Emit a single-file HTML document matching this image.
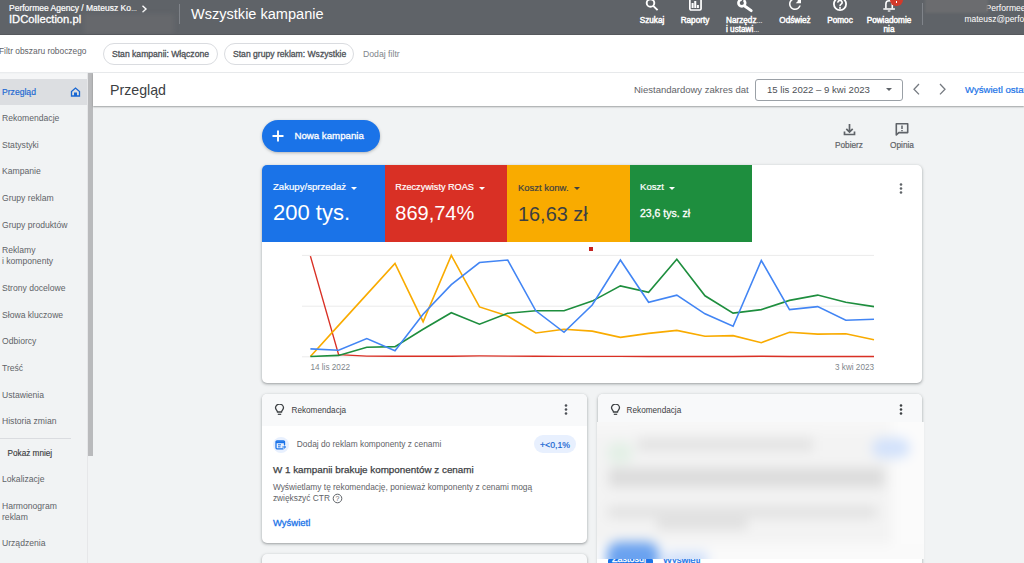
<!DOCTYPE html>
<html><head><meta charset="utf-8">
<style>
*{margin:0;padding:0;box-sizing:border-box}
html,body{width:1024px;height:563px;overflow:hidden;background:#f1f3f4;font-family:"Liberation Sans",sans-serif;color:#3c4043;position:relative}
.t{position:absolute;white-space:nowrap;line-height:1}
.med{-webkit-text-stroke:0.3px currentColor}
#hdr{position:absolute;left:0;top:0;width:1024px;height:35px;background:#5f6368;color:#fff;overflow:hidden;border-bottom:1px solid #56595d}
#fbar{position:absolute;left:0;top:35px;width:1024px;height:37px;background:#fff}
.chip{position:absolute;top:43px;height:22px;border:1px solid #dadce0;border-radius:11px}
.si{position:absolute;left:2px;font-size:8.6px;line-height:1;color:#5f6368;white-space:nowrap}
#sbar{position:absolute;left:88px;top:72px;width:5px;height:384.3px;background:#b9babc}
#tbar{position:absolute;left:93px;top:73px;width:931px;height:33px;background:#fff;box-shadow:0 1px 1.5px rgba(60,64,67,.45)}
.card{position:absolute;background:#fff;border-radius:5px;box-shadow:0 1px 2px rgba(60,64,67,.3),0 1px 3px 1px rgba(60,64,67,.15);overflow:hidden}
.hl{position:absolute;font-size:8.2px;color:#fff;line-height:9px;margin-top:-0.4px;white-space:nowrap;text-align:center;-webkit-text-stroke:0.45px #fff}
.tile{position:absolute;top:165px;height:77px}
.tri{position:absolute;width:0;height:0;border-left:3.5px solid transparent;border-right:3.5px solid transparent;border-top:3.5px solid #fff}
</style></head><body>

<div id="hdr">
  <div class="t" style="left:9px;top:4.2px;font-size:8.5px;color:#fff;-webkit-text-stroke:0.2px #fff">Performee Agency / Mateusz Ko<span style="font-size:6px">…</span></div>
  <svg style="position:absolute;left:141px;top:5px" width="7" height="8" viewBox="0 0 7 8"><path d="M1.5 0.8 L5 4 L1.5 7.2" fill="none" stroke="#fff" stroke-width="1.4"/></svg>
  <div class="t med" style="left:9px;top:13.8px;font-size:11.2px;color:#fff">IDCollection.pl</div>
  <div style="position:absolute;left:84px;top:14px;width:90px;height:20px;background:#66686c;filter:blur(2px)"></div>
  <div style="position:absolute;left:179px;top:4px;width:1px;height:20px;background:#80848a"></div>
  <div class="t" style="left:191px;top:6.7px;font-size:14.55px;color:#fff">Wszystkie kampanie</div>

  <!-- icons -->
  <svg style="position:absolute;left:644px;top:-3px" width="16" height="15" viewBox="0 0 16 15"><circle cx="6.5" cy="6" r="3.8" fill="none" stroke="#fff" stroke-width="1.9"/><path d="M9.2 8.8 L13.6 13.2" stroke="#fff" stroke-width="1.9"/></svg>
  <div class="hl" style="left:638px;top:16px;width:28px">Szukaj</div>

  <svg style="position:absolute;left:688px;top:-3px" width="15" height="15" viewBox="0 0 15 15"><rect x="1.85" y="-1" width="11.2" height="14" fill="none" stroke="#fff" stroke-width="1.7" rx="1.2"/><path d="M4.6 11 V5.9 M7.25 11 V4 M9.9 11 V7.9" stroke="#fff" stroke-width="2"/></svg>
  <div class="hl" style="left:680px;top:16px;width:30px">Raporty</div>

  <svg style="position:absolute;left:736px;top:-4px" width="18" height="18" viewBox="0 0 18 18"><circle cx="5.8" cy="7" r="3.4" fill="none" stroke="#fff" stroke-width="2.6"/><path d="M9 10.2 L15.2 14.6" stroke="#fff" stroke-width="2.9" stroke-linecap="round"/><path d="M5.9 6.8 L7 3" stroke="#5f6368" stroke-width="1.5"/></svg>
  <div class="hl" style="left:726px;top:16px;width:40px;text-align:left">Narzędz<span style="font-size:6px;line-height:0;-webkit-text-stroke:0.2px #fff">…</span><br>i ustawi<span style="font-size:6px;line-height:0;-webkit-text-stroke:0.2px #fff">…</span></div>

  <svg style="position:absolute;left:786px;top:-4.7px" width="18" height="18" viewBox="0 0 24 24"><path fill="#fff" d="M17.65 6.35A7.95 7.95 0 0 0 12 4c-4.42 0-7.99 3.58-7.99 8s3.57 8 7.99 8c3.73 0 6.84-2.55 7.73-6h-2.08A5.99 5.99 0 0 1 12 18c-3.31 0-6-2.690-6-6s2.69-6 6-6c1.66 0 3.140.69 4.22 1.78L13 11h7V4l-2.35 2.35z"/></svg>
  <div class="hl" style="left:778px;top:16px;width:34px">Odśwież</div>

  <svg style="position:absolute;left:832px;top:-2px" width="16" height="15" viewBox="0 0 16 15"><circle cx="8" cy="6" r="6.1" fill="none" stroke="#fff" stroke-width="1.8"/><path d="M5.9 4.6 A2.1 2.1 0 1 1 8.9 6.4 C8.2 6.9 8 7.2 8 8.2" fill="none" stroke="#fff" stroke-width="1.6"/><rect x="7.1" y="9.1" width="1.8" height="1.7" fill="#fff"/></svg>
  <div class="hl" style="left:826px;top:16px;width:28px">Pomoc</div>

  <svg style="position:absolute;left:882px;top:-1.4px" width="14" height="14" viewBox="0 0 14 14"><path d="M3.9 9.6 V5 A3.1 3.1 0 0 1 10.3 5 V9.6" fill="none" stroke="#fff" stroke-width="1.6"/><path d="M1.3 10 H12.9" stroke="#fff" stroke-width="1.5"/><path d="M5.8 12 H8.4" stroke="#fff" stroke-width="1.2"/></svg>
  <div style="position:absolute;left:890px;top:-6.4px;width:12.6px;height:12.6px;border-radius:50%;background:#d23a2b"></div>
  <div style="position:absolute;left:895.6px;top:0.6px;width:1.6px;height:2px;background:#fff"></div>
  <div class="hl" style="left:864px;top:16px;width:50px">Powiadomie<br>nia</div>

  <div style="position:absolute;left:922px;top:3px;width:1px;height:22px;background:#80848a"></div>
  <div class="t" style="left:985.5px;top:4.2px;font-size:8.6px;color:#fff">Performee</div>
  <div class="t" style="left:964.5px;top:15px;font-size:8.45px;color:#fff">mateusz@performee.pl</div>
  <div style="position:absolute;left:925px;top:-2px;width:63px;height:15px;background:#6b6c6f;filter:blur(0.8px)"></div>
</div>

<div id="fbar">
  <div class="t" style="left:-1px;top:11.6px;font-size:8.4px;color:#5f6368">Filtr obszaru roboczego</div>
  <div class="t" style="left:363px;top:15px;font-size:8.7px;color:#80868b">Dodaj filtr</div>
</div>
<div class="chip" style="left:103px;width:115px"></div>
<div class="t med" style="left:112px;top:50.2px;font-size:8.6px;color:#4d5156">Stan kampanii: Włączone</div>
<div class="chip" style="left:224px;width:130px"></div>
<div class="t med" style="left:233px;top:50.2px;font-size:8.6px;color:#4d5156">Stan grupy reklam: Wszystkie</div>

<div id="side">
</div>
<div style="position:absolute;left:0;top:78px;width:88px;height:26.5px;background:#dcdee1"></div>
<div class="si" style="top:87.8px;color:#1967d2;-webkit-text-stroke:0.15px #1967d2">Przegląd</div>
<svg style="position:absolute;left:70px;top:87px" width="11" height="10" viewBox="0 0 11 10"><path d="M1.5 9 V4.5 L5.5 1 L9.5 4.5 V9 Z" fill="none" stroke="#1967d2" stroke-width="1.3"/><rect x="4" y="5.5" width="3" height="3.5" fill="#1967d2"/></svg>
<div class="si" style="top:113.9px">Rekomendacje</div>
<div class="si" style="top:140.7px">Statystyki</div>
<div class="si" style="top:167.3px">Kampanie</div>
<div class="si" style="top:193.9px">Grupy reklam</div>
<div class="si" style="top:220.5px">Grupy produktów</div>
<div class="si" style="top:246.7px;line-height:10.6px;top:245px">Reklamy<br>i komponenty</div>
<div class="si" style="top:283.9px">Strony docelowe</div>
<div class="si" style="top:310.6px">Słowa kluczowe</div>
<div class="si" style="top:337.3px">Odbiorcy</div>
<div class="si" style="top:363.9px">Treść</div>
<div class="si" style="top:390.5px">Ustawienia</div>
<div class="si" style="top:417.1px">Historia zmian</div>
<div style="position:absolute;left:0;top:438px;width:71px;height:1px;background:#dadce0"></div>
<div class="si" style="left:7.6px;top:449.6px;color:#3c4043;font-size:8.2px;-webkit-text-stroke:0.15px #3c4043">Pokaż mniej</div>
<div class="si" style="top:475.1px">Lokalizacje</div>
<div class="si" style="line-height:10.7px;top:501px">Harmonogram<br>reklam</div>
<div class="si" style="top:538.9px">Urządzenia</div>
<div style="position:absolute;left:87px;top:72px;width:1px;height:491px;background:#e6e7e9"></div>
<div id="sbar"></div>

<div style="position:absolute;left:0;top:72px;width:1024px;height:1px;background:#eaecee"></div>
<div style="position:absolute;left:0;top:73.5px;width:87px;height:5px;background:#f5f6f7"></div>
<div id="tbar"></div>
<div class="t" style="left:110px;top:82.8px;font-size:14.2px;color:#3c4043">Przegląd</div>
<div class="t" style="left:634px;top:85px;font-size:9.5px;color:#5f6368">Niestandardowy zakres dat</div>
<div style="position:absolute;left:755px;top:79px;width:148px;height:22px;border:1px solid #9aa0a6;border-radius:3px;background:#fff"></div>
<div class="t" style="left:767px;top:85px;font-size:9.6px;color:#4d5156">15 lis 2022 – 9 kwi 2023</div>
<div class="tri" style="left:885.5px;top:88px;border-top-color:#5f6368"></div>
<svg style="position:absolute;left:912px;top:83px" width="9" height="13" viewBox="0 0 9 13"><path d="M7 1 L2 6.2 L7 11.4" fill="none" stroke="#757a80" stroke-width="1.3"/></svg>
<svg style="position:absolute;left:938px;top:83px" width="9" height="13" viewBox="0 0 9 13"><path d="M2 1 L7 6.2 L2 11.4" fill="none" stroke="#757a80" stroke-width="1.3"/></svg>
<div class="t" style="left:965px;top:85px;font-size:9.6px;color:#1a73e8;-webkit-text-stroke:0.2px #1a73e8">Wyświetl ostatnie</div>

<!-- Nowa kampania -->
<div style="position:absolute;left:262px;top:120px;width:118px;height:32px;border-radius:16px;background:#1a73e8;box-shadow:0 1px 3px rgba(60,64,67,.35)"></div>
<svg style="position:absolute;left:272px;top:130px" width="12" height="12" viewBox="0 0 12 12"><path d="M6 0.5 V11.5 M0.5 6 H11.5" stroke="#fff" stroke-width="1.9"/></svg>
<div class="t med" style="left:294.4px;top:130.8px;font-size:9.7px;color:#fff">Nowa kampania</div>

<!-- Pobierz / Opinia -->
<svg style="position:absolute;left:842px;top:123px" width="15" height="14" viewBox="0 0 15 14"><path d="M7.5 1 V9 M4.3 5.8 L7.5 9 L10.7 5.8" fill="none" stroke="#5f6368" stroke-width="1.7"/><path d="M2.5 8.5 V11.5 H12.5 V8.5" fill="none" stroke="#5f6368" stroke-width="1.7"/></svg>
<div class="t" style="left:835px;top:142px;font-size:8.26px;color:#5f6368;-webkit-text-stroke:0.2px #5f6368">Pobierz</div>
<svg style="position:absolute;left:894px;top:122px" width="16" height="15" viewBox="0 0 16 15"><path d="M2.3 1.8 H13.7 V10.6 H4.8 L2.3 13 Z" fill="none" stroke="#5f6368" stroke-width="1.6" stroke-linejoin="round"/><path d="M8 3.5 V7 M8 8 V9.3" stroke="#5f6368" stroke-width="1.5"/></svg>
<div class="t" style="left:890px;top:141px;font-size:8.3px;color:#5f6368;-webkit-text-stroke:0.2px #5f6368">Opinia</div>

<!-- chart card -->
<div class="card" style="left:262px;top:165px;width:660px;height:218px">
  <div class="tile" style="left:0;top:0;width:122.7px;background:#1a73e8"></div>
  <div class="tile" style="left:123px;top:0;width:122px;background:#d93025"></div>
  <div class="tile" style="left:245px;top:0;width:122.5px;background:#f9ab00"></div>
  <div class="tile" style="left:367.5px;top:0;width:122.5px;background:#1e8e3e"></div>
</div>
<div class="t" style="left:273px;top:182.3px;font-size:9.6px;color:#fff;-webkit-text-stroke:0.2px #fff">Zakupy/sprzedaż</div>
<div class="tri" style="left:350.5px;top:186.5px"></div>
<div class="t" style="left:273px;top:202px;font-size:22px;color:#fff">200 tys.</div>
<div class="t" style="left:395.3px;top:183.2px;font-size:9.15px;color:#fff;-webkit-text-stroke:0.2px #fff">Rzeczywisty ROAS</div>
<div class="tri" style="left:478.5px;top:186.5px"></div>
<div class="t" style="left:395.3px;top:203px;font-size:20px;color:#fff">869,74%</div>
<div class="t" style="left:518px;top:182.8px;font-size:9.48px;color:#3c4043;-webkit-text-stroke:0.2px #3c4043">Koszt konw.</div>
<div class="tri" style="left:574px;top:186.5px;border-top-color:#3c4043"></div>
<div class="t" style="left:518px;top:204.5px;font-size:19.9px;color:#3c4043">16,63 zł</div>
<div class="t" style="left:640px;top:182.3px;font-size:9.6px;color:#fff;-webkit-text-stroke:0.2px #fff">Koszt</div>
<div class="tri" style="left:668.5px;top:186.5px"></div>
<div class="t med" style="left:640px;top:207.8px;font-size:10.5px;color:#fff">23,6 tys. zł</div>
<svg style="position:absolute;left:898px;top:182px" width="6" height="14" viewBox="0 0 6 14"><circle cx="3" cy="2.5" r="1.3" fill="#5f6368"/><circle cx="3" cy="6.5" r="1.3" fill="#5f6368"/><circle cx="3" cy="10.5" r="1.3" fill="#5f6368"/></svg>
<div style="position:absolute;left:589px;top:247px;width:4px;height:4px;background:#c5221f"></div>

<svg style="position:absolute;left:0;top:0" width="1024" height="563" viewBox="0 0 1024 563">
  <path d="M302 255.4 H874 M302 306.2 H874 M302 356.8 H874" stroke="#ebebeb" stroke-width="1"/>
  <polyline fill="none" stroke="#d93025" stroke-width="1.4" points="310.4,256.1 338.6,354.7 366.8,356.1 395,356.3 423.1,356.3 451.3,356.2 479.5,355.9 507.7,356.1 535.8,356.3 564,356.4 592.2,356.4 620.4,356.4 648.6,356.5 676.8,356.5 705,356.5 733.1,356.5 761.3,356.3 789.5,356.5 817.7,356.5 845.8,356.5 874,356.5"/>
  <polyline fill="none" stroke="#f9ab00" stroke-width="1.6" points="310.4,356.5 338.6,325.4 366.8,294.4 395,263.5 423.1,321.7 451.3,255.4 479.5,306.9 507.7,316.1 535.8,333 564,329.3 592.2,331.1 620.4,337.4 648.6,333.4 676.8,330.4 705,336.2 733.1,335.6 761.3,342.7 789.5,332.3 817.7,334.1 845.8,333.7 874,339.7"/>
  <polyline fill="none" stroke="#1e8e3e" stroke-width="1.6" points="310.4,356.5 338.6,355.4 366.8,347.3 395,346.6 423.1,329.3 451.3,312.7 479.5,324.2 507.7,313.3 535.8,310.8 564,310.8 592.2,301.1 620.4,285.9 648.6,292.3 676.8,259.3 705,295.8 733.1,313.1 761.3,309.6 789.5,300.4 817.7,295.1 845.8,302.3 874,306.6"/>
  <polyline fill="none" stroke="#4285f4" stroke-width="1.6" points="310.4,348.9 338.6,350.3 366.8,338.5 395,350.7 423.1,314.3 451.3,284.7 479.5,262.5 507.7,260 535.8,310.8 564,332.3 592.2,305 620.4,260 648.6,302.3 676.8,295.1 705,313.8 733.1,326.3 761.3,260.5 789.5,309.6 817.7,306.6 845.8,320.3 874,319.3"/>
</svg>
<div class="t" style="left:310.4px;top:364px;font-size:8.2px;color:#80868b">14 lis 2022</div>
<div class="t" style="left:835px;top:364px;font-size:8.16px;color:#80868b">3 kwi 2023</div>

<!-- rec card 1 -->
<div class="card" style="left:262px;top:394px;width:325px;height:149px">
  <div style="position:absolute;left:0;top:0;width:325px;height:31.5px;background:#f8f9fa"></div>
</div>
<svg style="position:absolute;left:274px;top:404px" width="11" height="12" viewBox="0 0 11 12"><path d="M3.5 8 C3.5 6.5 1.5 5.5 1.5 3.8 A4 3.6 0 0 1 9.5 3.8 C9.5 5.5 7.5 6.5 7.5 8 Z" fill="none" stroke="#3c4043" stroke-width="1.3"/><path d="M3.8 10.3 H7.2" stroke="#3c4043" stroke-width="1.2"/></svg>
<div class="t" style="left:291.5px;top:406.8px;font-size:8.2px;color:#3c4043">Rekomendacja</div>
<svg style="position:absolute;left:562.5px;top:403.3px" width="6" height="14" viewBox="0 0 6 14"><circle cx="3" cy="2.5" r="1.3" fill="#4d5156"/><circle cx="3" cy="6.5" r="1.3" fill="#4d5156"/><circle cx="3" cy="10.5" r="1.3" fill="#4d5156"/></svg>
<div style="position:absolute;left:272.8px;top:436.7px;width:16px;height:16px;border-radius:50%;background:#e8f0fe"></div>
<svg style="position:absolute;left:275px;top:439.5px" width="12" height="11" viewBox="0 0 12 11"><path d="M8.5 8.8 H2 A1 1 0 0 1 1 7.8 V1.8 A1 1 0 0 1 2 0.8 H8.5 A1 1 0 0 1 9.5 1.8 V5" fill="none" stroke="#1a73e8" stroke-width="1.3"/><path d="M1 2.2 H9.5" stroke="#1a73e8" stroke-width="2"/><path d="M3 4.8 H6 M3 6.8 H5.5" stroke="#1a73e8" stroke-width="1"/><path d="M7.3 7 H10.3 M9 5.6 L10.6 7 L9 8.4" fill="none" stroke="#1a73e8" stroke-width="1"/></svg>
<div class="t" style="left:296.8px;top:439.7px;font-size:8.37px;color:#5f6368">Dodaj do reklam komponenty z cenami</div>
<div style="position:absolute;left:534px;top:435px;width:42px;height:18px;border-radius:9px;background:#e8f0fe"></div>
<div class="t" style="left:540px;top:440.6px;font-size:8.7px;color:#1967d2;-webkit-text-stroke:0.2px #1967d2">+&lt;0,1%</div>
<div class="t med" style="left:272.9px;top:464.6px;font-size:9.85px;color:#3c4043;-webkit-text-stroke:0.25px #3c4043">W 1 kampanii brakuje komponentów z cenami</div>
<div class="t" style="left:272.9px;top:483px;font-size:8.36px;color:#5f6368">Wyświetlamy tę rekomendację, ponieważ komponenty z cenami mogą</div>
<div class="t" style="left:272.9px;top:494px;font-size:8.36px;color:#5f6368">zwiększyć CTR</div>
<svg style="position:absolute;left:331.5px;top:492.5px" width="11" height="11" viewBox="0 0 11 11"><circle cx="5.5" cy="5.5" r="4.3" fill="none" stroke="#5f6368" stroke-width="1"/><text x="5.5" y="8.2" font-size="7" fill="#5f6368" text-anchor="middle" font-family="Liberation Sans">?</text></svg>
<div class="t med" style="left:272.9px;top:518.3px;font-size:9.5px;color:#1a73e8">Wyświetl</div>

<!-- card below -->
<div class="card" style="left:262px;top:553.5px;width:325px;height:40px;background:#f8f9fa"></div>

<!-- rec card 2 -->
<div class="card" style="left:597.5px;top:394px;width:324.3px;height:180px">
  <div style="position:absolute;left:0;top:0;width:325px;height:31.5px;background:#f8f9fa"></div>
</div>
<svg style="position:absolute;left:609.5px;top:404px" width="11" height="12" viewBox="0 0 11 12"><path d="M3.5 8 C3.5 6.5 1.5 5.5 1.5 3.8 A4 3.6 0 0 1 9.5 3.8 C9.5 5.5 7.5 6.5 7.5 8 Z" fill="none" stroke="#3c4043" stroke-width="1.3"/><path d="M3.8 10.3 H7.2" stroke="#3c4043" stroke-width="1.2"/></svg>
<div class="t" style="left:626.6px;top:406.8px;font-size:8.2px;color:#3c4043">Rekomendacja</div>
<svg style="position:absolute;left:898px;top:403px" width="6" height="14" viewBox="0 0 6 14"><circle cx="3" cy="2.5" r="1.3" fill="#3c4043"/><circle cx="3" cy="6.5" r="1.3" fill="#3c4043"/><circle cx="3" cy="10.5" r="1.3" fill="#3c4043"/></svg>

<div style="position:absolute;left:597px;top:422px;width:325px;height:141px;overflow:hidden;background:#fff">
  <div class="a" style="position:absolute;left:11px;top:136px;width:45px;height:20px;border-radius:3px;background:#1a73e8"></div>
  <div class="t med" style="left:66px;top:132.5px;font-size:9.5px;color:#1a73e8">Wyświetl</div>
  <div class="t med" style="left:15px;top:132.5px;font-size:9px;color:#fff">Zastosuj</div>
</div>
<div style="position:absolute;left:597px;top:422px;width:327px;height:137px;overflow:hidden;background:#f5f5f5">
  <div style="position:absolute;left:-20px;top:-20px;width:380px;height:180px;filter:blur(6px)">
    <div style="position:absolute;left:0;top:0;width:380px;height:180px;background:#f3f3f3"></div>
    <div style="position:absolute;left:0;top:0;width:380px;height:30px;background:#f7f7f7"></div>
    <div style="position:absolute;left:30px;top:40px;width:26px;height:22px;border-radius:50%;background:#e3f0e6"></div>
    <div style="position:absolute;left:61px;top:36px;width:175px;height:13px;background:#e3e3e3"></div>
    <div style="position:absolute;left:32px;top:66px;width:275px;height:19px;background:#dcdcdc"></div>
    <div style="position:absolute;left:31px;top:104px;width:269px;height:12px;background:#e2e2e2"></div>
    <div style="position:absolute;left:80px;top:117px;width:90px;height:10px;background:#dedede"></div>
    <div style="position:absolute;left:315px;top:0;width:65px;height:180px;background:#fbfbfb"></div>
    <div style="position:absolute;left:0;top:142px;width:380px;height:40px;background:#fafafa"></div>
    <div style="position:absolute;left:295px;top:36px;width:38px;height:20px;border-radius:10px;background:#d3e2fb"></div>
    <div style="position:absolute;left:30px;top:140px;width:52px;height:30px;border-radius:12px;background:#6aa2f0"></div>
    <div style="position:absolute;left:88px;top:150px;width:42px;height:16px;background:#d0e0fa"></div>
  </div>
</div>

</body></html>
